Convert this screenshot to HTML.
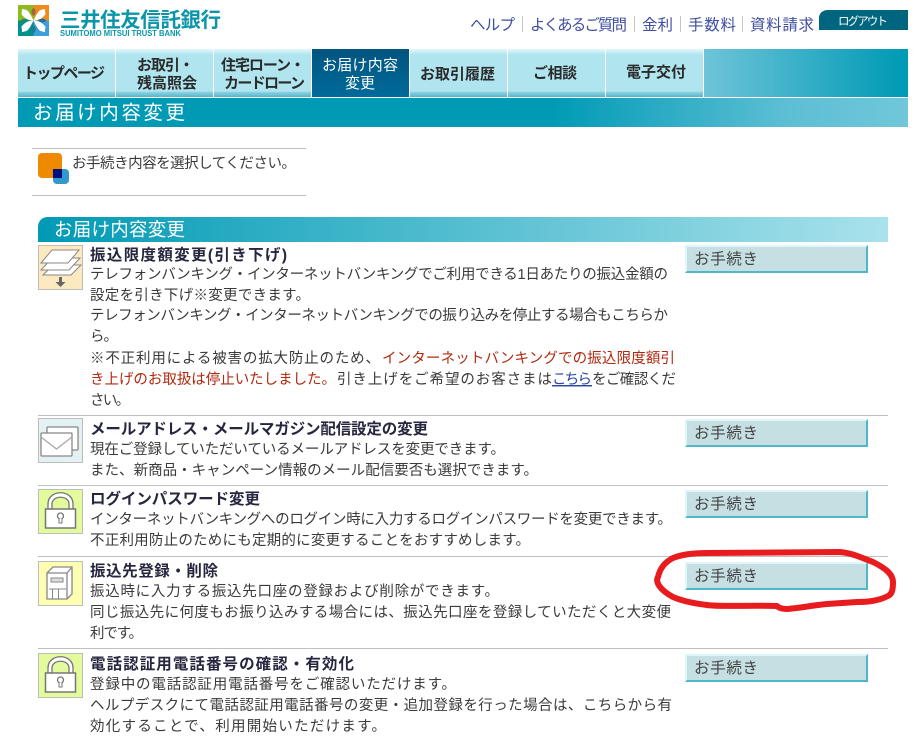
<!DOCTYPE html>
<html lang="ja">
<head>
<meta charset="utf-8">
<title>お届け内容変更</title>
<style>
html,body{margin:0;padding:0;background:#fff;width:923px;height:736px;overflow:hidden}
svg{display:block;position:absolute;left:0;top:0}
text{font-family:"Liberation Sans","Noto Sans CJK JP",sans-serif;white-space:pre}
.t{font-size:14.5px;fill:#3a3a3a}
.r{font-size:14.5px;fill:#b02a10}
.h{font-size:15.5px;font-weight:bold;fill:#26263e}
.n{font-size:15px;font-weight:bold;fill:#2a2a2a}
.l{font-size:15.5px;fill:#3f4f9f}
.b{font-size:15.5px;fill:#444}
</style>
</head>
<body>
<svg width="923" height="736" viewBox="0 0 923 736" xmlns="http://www.w3.org/2000/svg">
<defs>
<linearGradient id="tab" x1="0" y1="0" x2="0" y2="1">
<stop offset="0" stop-color="#e4f6fa"/><stop offset=".12" stop-color="#b0e5ef"/><stop offset=".88" stop-color="#b0e5ef"/><stop offset=".9" stop-color="#8fd2e0"/><stop offset="1" stop-color="#4fb6cb"/>
</linearGradient>
<linearGradient id="rest" x1="0" y1="0" x2="1" y2="0">
<stop offset="0" stop-color="#6ec4d8"/><stop offset=".97" stop-color="#009ab5"/>
</linearGradient>
<linearGradient id="band" x1="0" y1="0" x2="1" y2="0">
<stop offset="0" stop-color="#009ab5"/><stop offset=".6" stop-color="#009ab5"/><stop offset=".86" stop-color="#5cbed4"/><stop offset="1" stop-color="#70c7da"/>
</linearGradient>
<linearGradient id="sec" x1="0" y1="0" x2="1" y2="0">
<stop offset="0" stop-color="#009ab5"/><stop offset="1" stop-color="#a9e2ec"/>
</linearGradient>
<linearGradient id="cur" x1="0" y1="0" x2="0" y2="1">
<stop offset="0" stop-color="#00557e"/><stop offset="1" stop-color="#006a9a"/>
</linearGradient>
<g id="lock">
<rect x=".5" y=".5" width="44" height="44" fill="#e3fb9c" stroke="#bdbdbd"/>
<path d="M10 20V15C10 0 35 0 35 15V20H31V15C31 6 14 6 14 15V20Z" fill="#fff" stroke="#777" stroke-width="1.3"/>
<rect x="7.5" y="20" width="30" height="19" fill="#fff" stroke="#777" stroke-width="1.5"/>
<circle cx="22.5" cy="27" r="3" fill="#fff" stroke="#777" stroke-width="1.3"/>
<path d="M21 29.5V34H24V29.5" fill="#fff" stroke="#777" stroke-width="1"/>
</g>
<g id="btn">
<rect x="0" y="0" width="183" height="28" fill="#c5dfe3"/>
<path d="M0 0H183L181 2H2V26L0 28Z" fill="#dff7fa"/>
<path d="M183 0V28H0L2 26H181V2Z" fill="#50b6ca"/>
<text class="b" x="9" y="19" textLength="64" lengthAdjust="spacing">お手続き</text>
</g>
</defs>

<!-- logo -->
<g>
<rect x="18" y="5" width="15.5" height="15.5" fill="#8dbb1f"/>
<rect x="33.5" y="5" width="15.5" height="15.5" fill="#ef8a1d"/>
<rect x="18" y="20.5" width="15.5" height="15.5" fill="#00908f"/>
<rect x="33.5" y="20.5" width="15.5" height="15.5" fill="#3c9fd6"/>
<path d="M33.5 20.5C28 9 27 10 22 9C22 13 21 14 22 15C24 17 26 20 33.5 20.5Z" fill="#fff"/>
<path d="M33.5 20.5C39 9 40 10 45 9C45 13 46 14 45 15C43 17 41 20 33.5 20.5Z" fill="#fff"/>
<path d="M33.5 20.5C28 32 27 31 22 32C22 28 21 27 22 26C24 24 26 21 33.5 20.5Z" fill="#fff"/>
<path d="M33.5 20.5C39 32 40 31 45 32C45 28 46 27 45 26C43 24 41 21 33.5 20.5Z" fill="#fff"/>
<path d="M33.5 8C36 10 37 13 33.5 16 30 13 31 10 33.5 8Z" fill="#9a6a3a"/>
<path d="M33.5 33C36 31 37 28 33.5 25 30 28 31 31 33.5 33Z" fill="#1d7d92"/>
<path d="M21 20.5C23 18 26 18 29 20.5 26 23 23 23 21 20.5Z" fill="#1d8a70"/>
<path d="M38 20.5C41 18 44 18 46 20.5 44 23 41 23 38 20.5Z" fill="#1d6fa8"/>
</g>
<text x="60" y="27" style="font-size:20.5px;font-weight:bold;fill:#0b95a8" textLength="161" lengthAdjust="spacing">三井住友信託銀行</text>
<text x="60" y="36" style="font-size:8px;font-weight:bold;fill:#0b95a8" textLength="121" lengthAdjust="spacingAndGlyphs">SUMITOMO MITSUI TRUST BANK</text>

<!-- top links -->
<text class="l" x="470" y="30" textLength="45" lengthAdjust="spacing">ヘルプ</text>
<text class="l" x="530" y="30" textLength="97" lengthAdjust="spacing">よくあるご質問</text>
<text class="l" x="642" y="30" textLength="31" lengthAdjust="spacing">金利</text>
<text class="l" x="688" y="30" textLength="48" lengthAdjust="spacing">手数料</text>
<text class="l" x="750" y="30" textLength="64" lengthAdjust="spacing">資料請求</text>
<rect x="522" y="16" width="1" height="16" fill="#c4c4c4"/>
<rect x="634" y="16" width="1" height="16" fill="#c4c4c4"/>
<rect x="680" y="16" width="1" height="16" fill="#c4c4c4"/>
<rect x="742" y="16" width="1" height="16" fill="#c4c4c4"/>
<path d="M819 30V18C819 13 823 10 828 10H908V30Z" fill="#00667f"/>
<text x="838" y="25" style="font-size:11.5px;fill:#fff" textLength="50" lengthAdjust="spacing">ログアウト</text>

<!-- nav -->
<rect x="18" y="49" width="97" height="48" fill="url(#tab)"/>
<rect x="116" y="49" width="97" height="48" fill="url(#tab)"/>
<rect x="214" y="49" width="97" height="48" fill="url(#tab)"/>
<rect x="312" y="49" width="97" height="48" fill="url(#cur)"/>
<rect x="410" y="49" width="97" height="48" fill="url(#tab)"/>
<rect x="508" y="49" width="97" height="48" fill="url(#tab)"/>
<rect x="606" y="49" width="97" height="48" fill="url(#tab)"/>
<rect x="704" y="49" width="204" height="48" fill="url(#rest)"/>
<text class="n" x="23" y="78" textLength="82" lengthAdjust="spacing">トップページ</text>
<text class="n" x="137" y="70" textLength="57" lengthAdjust="spacing">お取引・</text>
<text class="n" x="137" y="88" textLength="60" lengthAdjust="spacing">残高照会</text>
<text class="n" x="221" y="70" textLength="84" lengthAdjust="spacing">住宅ローン・</text>
<text class="n" x="224" y="88" textLength="81" lengthAdjust="spacing">カードローン</text>
<text x="322" y="70" style="font-size:15px;fill:#fff" textLength="76" lengthAdjust="spacing">お届け内容</text>
<text x="345" y="88" style="font-size:15px;fill:#fff" textLength="30" lengthAdjust="spacing">変更</text>
<text class="n" x="420" y="79" textLength="75" lengthAdjust="spacing">お取引履歴</text>
<text class="n" x="533" y="78" textLength="44" lengthAdjust="spacing">ご相談</text>
<text class="n" x="626" y="77" textLength="60" lengthAdjust="spacing">電子交付</text>

<!-- title band -->
<rect x="18" y="98" width="890" height="29" fill="url(#band)"/>
<text x="33" y="119" style="font-size:19.5px;fill:#fff" textLength="152" lengthAdjust="spacing">お届け内容変更</text>

<!-- instruction -->
<rect x="32" y="148" width="274" height="1" fill="#c0c0c0"/>
<rect x="32" y="195" width="274" height="1" fill="#c0c0c0"/>
<rect x="38" y="153" width="24" height="25" rx="4" fill="#ef8a00"/>
<rect x="53" y="169" width="16" height="15" rx="4" fill="#3399cc"/>
<rect x="53" y="169" width="9" height="9" fill="#000f80"/>
<text class="t" x="72" y="168" textLength="224" lengthAdjust="spacing">お手続き内容を選択してください。</text>

<!-- section -->
<path d="M38 242V227C38 221 42 217 48 217H888V242Z" fill="url(#sec)"/>
<text x="54" y="236" style="font-size:18.5px;fill:#fff" textLength="131" lengthAdjust="spacing">お届け内容変更</text>

<!-- row 1 -->
<g transform="translate(38 245)">
<rect x=".5" y=".5" width="44" height="44" fill="#fde9bf" stroke="#bdbdbd"/>
<path d="M5 30L15 20H43L33 30Z" fill="#fff" stroke="#888"/>
<path d="M3 25L14 13H42L31 25Z" fill="#fff" stroke="#888"/>
<path d="M3 18L14 5H41L30 18Z" fill="#fff" stroke="#888"/>
<path d="M21 32H24V37H27.5L22.5 42 17.5 37H21Z" fill="#666"/>
</g>
<text class="h" x="90" y="260" textLength="197" lengthAdjust="spacing">振込限度額変更(引き下げ)</text>
<text class="t" x="90" y="279" textLength="578" lengthAdjust="spacing">テレフォンバンキング・インターネットバンキングでご利用できる1日あたりの振込金額の</text>
<text class="t" x="90" y="300" textLength="220" lengthAdjust="spacing">設定を引き下げ※変更できます。</text>
<text class="t" x="90" y="320" textLength="578" lengthAdjust="spacing">テレフォンバンキング・インターネットバンキングでの振り込みを停止する場合もこちらか</text>
<text class="t" x="90" y="341" textLength="28" lengthAdjust="spacing">ら。</text>
<text class="t" x="90" y="363" textLength="290" lengthAdjust="spacing">※不正利用による被害の拡大防止のため、</text>
<text class="r" x="382" y="363" textLength="293" lengthAdjust="spacing">インターネットバンキングでの振込限度額引</text>
<text class="r" x="90" y="384" textLength="246" lengthAdjust="spacing">き上げのお取扱は停止いたしました。</text>
<text class="t" x="337" y="384" textLength="215" lengthAdjust="spacing">引き上げをご希望のお客さまは</text>
<text x="552" y="384" style="font-size:14.5px;fill:#2a45a8;text-decoration:underline" textLength="40" lengthAdjust="spacing">こちら</text>
<text class="t" x="592" y="384" textLength="84" lengthAdjust="spacing">をご確認くだ</text>
<text class="t" x="90" y="405" textLength="40" lengthAdjust="spacing">さい。</text>
<use href="#btn" x="685" y="245"/>
<rect x="38" y="415" width="850" height="1" fill="#c0c0c0"/>

<!-- row 2 -->
<g transform="translate(38 418)">
<rect x=".5" y=".5" width="44" height="44" fill="#e3f1f3" stroke="#bdbdbd"/>
<rect x="9" y="9" width="31" height="23" rx="1" fill="#fff" stroke="#888" stroke-width="1.3"/>
<rect x="3" y="15" width="31" height="23" rx="1" fill="#fff" stroke="#888" stroke-width="1.3"/>
<path d="M3 19L18.5 31 34 19" fill="none" stroke="#aaa" stroke-width="1.3"/>
</g>
<text class="h" x="90" y="434" textLength="338" lengthAdjust="spacing">メールアドレス・メールマガジン配信設定の変更</text>
<text class="t" x="90" y="454" textLength="415" lengthAdjust="spacing">現在ご登録していただいているメールアドレスを変更できます。</text>
<text class="t" x="90" y="475" textLength="448" lengthAdjust="spacing">また、新商品・キャンペーン情報のメール配信要否も選択できます。</text>
<use href="#btn" x="685" y="419"/>
<rect x="38" y="485" width="850" height="1" fill="#c0c0c0"/>

<!-- row 3 -->
<use href="#lock" x="38" y="489"/>
<text class="h" x="90" y="504" textLength="170" lengthAdjust="spacing">ログインパスワード変更</text>
<text class="t" x="90" y="524" textLength="582" lengthAdjust="spacing">インターネットバンキングへのログイン時に入力するログインパスワードを変更できます。</text>
<text class="t" x="90" y="545" textLength="440" lengthAdjust="spacing">不正利用防止のためにも定期的に変更することをおすすめします。</text>
<use href="#btn" x="685" y="490"/>
<rect x="38" y="556" width="850" height="1" fill="#c0c0c0"/>

<!-- row 4 -->
<g transform="translate(38 561)">
<rect x=".5" y=".5" width="44" height="44" fill="#fdfdb4" stroke="#bdbdbd"/>
<path d="M9 12L15 6H34V33L29 38H9Z" fill="#fff" stroke="#888" stroke-width="1.3"/>
<path d="M9 12H29V38M29 12L34 6" fill="none" stroke="#888" stroke-width="1.3"/>
<rect x="13" y="17" width="12" height="4" fill="#ddd" stroke="#888"/>
<path d="M11 28H28M14.5 28V38M20.5 28V38" fill="none" stroke="#888"/>
</g>
<text class="h" x="90" y="576" textLength="128" lengthAdjust="spacing">振込先登録・削除</text>
<text class="t" x="90" y="596" textLength="409" lengthAdjust="spacing">振込時に入力する振込先口座の登録および削除ができます。</text>
<text class="t" x="90" y="617" textLength="581" lengthAdjust="spacing">同じ振込先に何度もお振り込みする場合には、振込先口座を登録していただくと大変便</text>
<text class="t" x="90" y="638" textLength="53" lengthAdjust="spacing">利です。</text>
<use href="#btn" x="685" y="562"/>
<rect x="38" y="648" width="850" height="1" fill="#c0c0c0"/>

<!-- row 5 -->
<use href="#lock" x="38" y="653"/>
<text class="h" x="90" y="669" textLength="264" lengthAdjust="spacing">電話認証用電話番号の確認・有効化</text>
<text class="t" x="90" y="689" textLength="366" lengthAdjust="spacing">登録中の電話認証用電話番号をご確認いただけます。</text>
<text class="t" x="90" y="710" textLength="582" lengthAdjust="spacing">ヘルプデスクにて電話認証用電話番号の変更・追加登録を行った場合は、こちらから有</text>
<text class="t" x="90" y="731" textLength="296" lengthAdjust="spacing">効化することで、利用開始いただけます。</text>
<use href="#btn" x="685" y="654"/>

<!-- red circle -->
<path d="M777 606C750 605 720 607 707 605C690 603 680 600 673 597C660 590 655 582 658 577C660 568 665 562 673 558C683 554 695 553 707 553L840 552C852 553 862 558 873 562C885 568 893 574 893 582C893 590 892 594 888 596C878 601 868 602 857 602L827 604C815 605 800 608 787 609C782 609 779 608 777 606Z" fill="none" stroke="#e81c1e" stroke-width="6" stroke-linejoin="round"/>
</svg>
</body>
</html>
